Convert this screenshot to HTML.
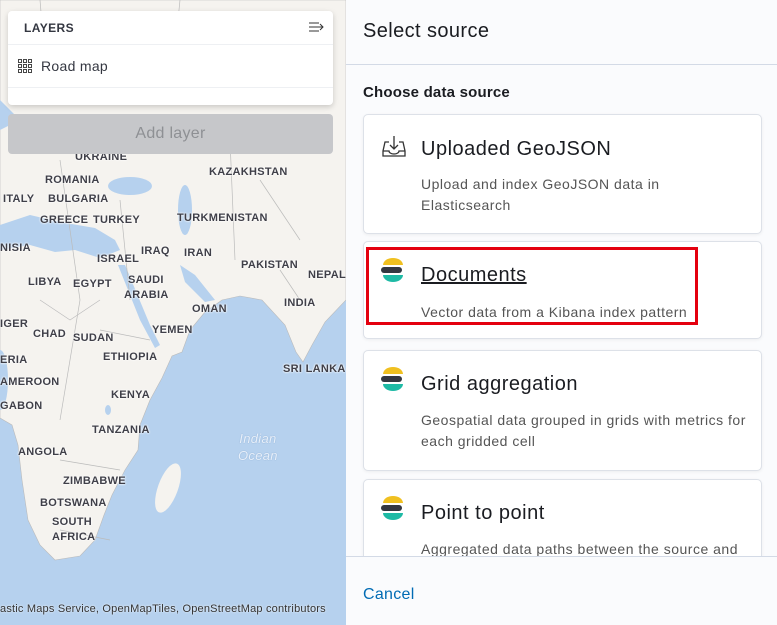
<!DOCTYPE html>
<html><head><meta charset="utf-8"><style>
*{box-sizing:border-box;margin:0;padding:0}
body{width:777px;height:625px;overflow:hidden;font-family:"Liberation Sans",sans-serif;position:relative;background:#fafbfd}
#map{position:absolute;left:0;top:0;width:346px;height:625px;overflow:hidden;background:#b6d1ee}
#map svg{position:absolute;left:0;top:0}
.lbl{position:absolute;font-size:11px;font-weight:bold;color:#3f3f48;letter-spacing:0.3px;white-space:nowrap;text-shadow:0 0 2px #fff,0 0 2px #fff}
.panel{position:absolute;left:8px;top:11px;width:325px;height:94px;background:#fff;border-radius:4px;box-shadow:0 2px 6px rgba(0,0,0,.18)}
.addl{position:absolute;left:8px;top:114px;width:325px;height:40px;background:#c6c7ca;border-radius:4px;color:#8e9094;font-size:16px;text-align:center;line-height:40px;letter-spacing:.3px}
#right{position:absolute;left:346px;top:0;width:431px;height:625px;background:#fafbfd}
.card{position:absolute;left:17px;width:399px;background:#fff;border:1px solid #dde1e8;border-radius:5px;box-shadow:0 1px 3px rgba(0,0,0,.06)}
.card h3{position:absolute;left:57px;font-size:20px;font-weight:normal;color:#1a1c21;letter-spacing:0.5px}
.card p{position:absolute;left:57px;font-size:14px;color:#555;line-height:21px;width:330px;letter-spacing:0.5px}
.elk{position:absolute;left:17px;width:24px;height:28px}
</style></head><body>
<div id="map">
<svg width="346" height="625">
<polygon fill="#f5f3ef" stroke="#bbb" stroke-width="0.6" points="0,0 346,0 346,300 325,322 312,345 303,362 296,352 285,325 262,300 240,296 222,300 205,312 190,330 182,352 172,356 162,378 150,400 140,425 138,450 125,470 112,495 104,515 95,540 80,556 55,560 40,545 28,520 22,480 18,445 12,425 0,418"/>
<polygon fill="#b6d1ee" points="0,225 30,215 60,222 95,228 115,240 120,250 100,258 75,250 55,252 30,245 0,250"/>
<ellipse cx="130" cy="186" rx="22" ry="9" fill="#b6d1ee"/>
<ellipse cx="185" cy="210" rx="7" ry="25" fill="#b6d1ee"/>
<polygon fill="#b6d1ee" points="118,265 125,265 150,325 160,345 155,348 140,320"/>
<polygon fill="#b6d1ee" points="180,265 195,275 215,300 205,302 185,282"/>
<ellipse cx="168" cy="488" rx="10" ry="26" fill="#f5f3ef" transform="rotate(20 168 488)"/>
<ellipse cx="108" cy="410" rx="3" ry="5" fill="#b6d1ee"/>
<ellipse cx="0" cy="380" rx="8" ry="30" fill="#b6d1ee"/>
<polygon fill="#b6d1ee" points="0,100 10,110 20,120 0,130"/>
<path d="M40,0 L45,60 M180,0 L175,50 M60,160 L80,300 L60,420 M120,200 L130,300 M40,300 L70,320 L100,300 M100,330 L150,340 M60,460 L120,470 M60,530 L110,540 M230,140 L235,260 M260,180 L300,240 M280,270 L300,300" stroke="#bbb" stroke-width="0.7" fill="none"/>
</svg>
<div class="lbl" style="left:75px;top:151px">UKRAINE</div>
<div class="lbl" style="left:209px;top:166px">KAZAKHSTAN</div>
<div class="lbl" style="left:45px;top:174px">ROMANIA</div>
<div class="lbl" style="left:3px;top:193px">ITALY</div>
<div class="lbl" style="left:48px;top:193px">BULGARIA</div>
<div class="lbl" style="left:40px;top:214px">GREECE</div>
<div class="lbl" style="left:93px;top:214px">TURKEY</div>
<div class="lbl" style="left:177px;top:212px">TURKMENISTAN</div>
<div class="lbl" style="left:0px;top:242px">NISIA</div>
<div class="lbl" style="left:97px;top:253px">ISRAEL</div>
<div class="lbl" style="left:141px;top:245px">IRAQ</div>
<div class="lbl" style="left:184px;top:247px">IRAN</div>
<div class="lbl" style="left:241px;top:259px">PAKISTAN</div>
<div class="lbl" style="left:308px;top:269px">NEPAL</div>
<div class="lbl" style="left:28px;top:276px">LIBYA</div>
<div class="lbl" style="left:73px;top:278px">EGYPT</div>
<div class="lbl" style="left:128px;top:274px">SAUDI</div>
<div class="lbl" style="left:124px;top:289px">ARABIA</div>
<div class="lbl" style="left:284px;top:297px">INDIA</div>
<div class="lbl" style="left:192px;top:303px">OMAN</div>
<div class="lbl" style="left:0px;top:318px">IGER</div>
<div class="lbl" style="left:152px;top:324px">YEMEN</div>
<div class="lbl" style="left:33px;top:328px">CHAD</div>
<div class="lbl" style="left:73px;top:332px">SUDAN</div>
<div class="lbl" style="left:0px;top:354px">ERIA</div>
<div class="lbl" style="left:103px;top:351px">ETHIOPIA</div>
<div class="lbl" style="left:283px;top:363px">SRI LANKA</div>
<div class="lbl" style="left:0px;top:376px">AMEROON</div>
<div class="lbl" style="left:111px;top:389px">KENYA</div>
<div class="lbl" style="left:0px;top:400px">GABON</div>
<div class="lbl" style="left:92px;top:424px">TANZANIA</div>
<div class="lbl" style="left:238px;top:430px;font-style:italic;font-weight:normal;color:#e8f0fa;text-shadow:0 0 1px #7fa0c8;font-size:13px;line-height:17px;text-align:center">Indian<br>Ocean</div>
<div class="lbl" style="left:18px;top:446px">ANGOLA</div>
<div class="lbl" style="left:63px;top:475px">ZIMBABWE</div>
<div class="lbl" style="left:40px;top:497px">BOTSWANA</div>
<div class="lbl" style="left:52px;top:516px">SOUTH</div>
<div class="lbl" style="left:52px;top:531px">AFRICA</div>
<div style="position:absolute;left:0;top:603px;font-size:11px;color:#333;white-space:nowrap;letter-spacing:.2px;text-shadow:0 0 2px #fff">astic Maps Service, OpenMapTiles, OpenStreetMap contributors</div>
<div class="panel">
<div style="position:absolute;left:16px;top:10px;font-size:12px;font-weight:bold;color:#343741;letter-spacing:.4px">LAYERS</div>
<svg style="position:absolute;left:300px;top:10px" width="16" height="12"><path d="M1,2H11M1,6H15M1,10H11M12,3L15,6L12,9" stroke="#333" fill="none" stroke-width="1"/></svg>
<div style="position:absolute;left:0;top:33px;width:325px;border-top:1px solid #eef0f3"></div>
<svg style="position:absolute;left:10px;top:48px" width="14" height="14" fill="none" stroke="#333" stroke-width="0.9"><rect x="0.5" y="0.5" width="3" height="3"/><rect x="5.5" y="0.5" width="3" height="3"/><rect x="10.5" y="0.5" width="3" height="3"/><rect x="0.5" y="5.5" width="3" height="3"/><rect x="5.5" y="5.5" width="3" height="3"/><rect x="10.5" y="5.5" width="3" height="3"/><rect x="0.5" y="10.5" width="3" height="3"/><rect x="5.5" y="10.5" width="3" height="3"/><rect x="10.5" y="10.5" width="3" height="3"/></svg>
<div style="position:absolute;left:33px;top:47px;font-size:14px;color:#343741;letter-spacing:.3px">Road map</div>
<div style="position:absolute;left:0;top:76px;width:325px;border-top:1px solid #eef0f3"></div>
</div>
<div class="addl">Add layer</div>
</div>
<div id="right">
<div style="position:absolute;left:17px;top:20px;font-size:20px;color:#1a1c21;letter-spacing:.4px">Select source</div>
<div style="position:absolute;left:0;top:64px;width:431px;border-top:1px solid #d3dae6"></div>
<div style="position:absolute;left:17px;top:84px;font-size:15px;font-weight:bold;color:#1a1c21;letter-spacing:.2px">Choose data source</div>
<div class="card" style="top:114px;height:120px">
<svg style="position:absolute;left:18px;top:20px" width="24" height="22" fill="none" stroke="#333" stroke-width="1.3"><path d="M7,7H3L1,16V21H23V16L21,7H17M12,1V14M8,10L12,14L16,10M1,16H7A5,3 0 0 0 17,16H23"/></svg>
<h3 style="top:23px">Uploaded GeoJSON</h3>
<p style="top:59px">Upload and index GeoJSON data in Elasticsearch</p>
</div>
<div class="card" style="top:241px;height:98px">
<svg class="elk" style="top:15px" viewBox="0 0 24 28"><path d="M2,8A10,7 0 0 1 22,8Z" fill="#f0c020"/><rect x="0" y="10" width="21" height="6" rx="3" fill="#343741"/><path d="M2,18H22A10,7 0 0 1 2,18Z" fill="#1ebaa5"/></svg>
<h3 style="top:22px;text-decoration:underline">Documents</h3>
<p style="top:60px">Vector data from a Kibana index pattern</p>
</div>
<div style="position:absolute;left:20px;top:247px;width:332px;height:78px;border:3px solid #e4000f"></div>
<div class="card" style="top:350px;height:121px">
<svg class="elk" style="top:15px" viewBox="0 0 24 28"><path d="M2,8A10,7 0 0 1 22,8Z" fill="#f0c020"/><rect x="0" y="10" width="21" height="6" rx="3" fill="#343741"/><path d="M2,18H22A10,7 0 0 1 2,18Z" fill="#1ebaa5"/></svg>
<h3 style="top:22px">Grid aggregation</h3>
<p style="top:59px">Geospatial data grouped in grids with metrics for each gridded cell</p>
</div>
<div class="card" style="top:479px;height:100px">
<svg class="elk" style="top:15px" viewBox="0 0 24 28"><path d="M2,8A10,7 0 0 1 22,8Z" fill="#f0c020"/><rect x="0" y="10" width="21" height="6" rx="3" fill="#343741"/><path d="M2,18H22A10,7 0 0 1 2,18Z" fill="#1ebaa5"/></svg>
<h3 style="top:22px">Point to point</h3>
<p style="top:59px;white-space:nowrap">Aggregated data paths between the source and</p>
</div>
<div style="position:absolute;left:0;top:556px;width:431px;height:69px;background:#fafbfd;border-top:1px solid #d3dae6"></div>
<div style="position:absolute;left:17px;top:586px;font-size:16px;color:#006bb4;letter-spacing:.3px">Cancel</div>
</div>
</body></html>
